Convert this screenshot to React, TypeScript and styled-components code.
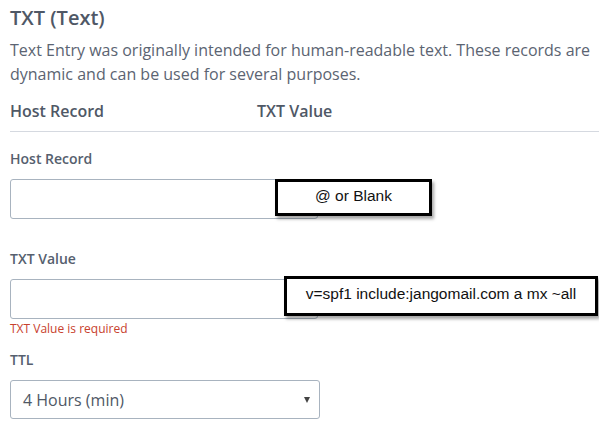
import React from "react";
import styled, { createGlobalStyle } from "styled-components";

const GlobalStyle = createGlobalStyle`
  html, body {
    margin: 0;
    padding: 0;
    background: #ffffff;
  }
  body {
    font-family: "Open Sans", "Liberation Sans", sans-serif;
    color: #555d6b;
  }
`;

const Page = styled.div`
  width: 599px;
  height: 445px;
  overflow: hidden;
  padding: 4px 0 0 10px;
  box-sizing: border-box;
`;

const Title = styled.h2`
  margin: 0;
  font-size: 20px;
  line-height: 28px;
  font-weight: 600;
  color: #4f5866;
`;

const Description = styled.p`
  margin: 6px 0 0;
  font-size: 16px;
  line-height: 24px;
  color: #5b6472;
`;

const HeaderRow = styled.div`
  display: grid;
  grid-template-columns: 247px 1fr;
  margin-top: 14px;
  padding-bottom: 9px;
  border-bottom: 1px solid #d5d9e0;
  font-size: 16px;
  line-height: 22px;
  font-weight: 600;
  color: #4f5866;
`;

const Field = styled.div<{ $gap?: number }>`
  display: flex;
  flex-direction: column;
  margin-top: ${({ $gap }) => $gap ?? 18}px;
`;

const Label = styled.label`
  font-size: 14px;
  line-height: 20px;
  font-weight: 600;
  color: #56606e;
  margin-bottom: 10px;
`;

const InputWrap = styled.div`
  position: relative;
  width: 308px;
  height: 40px;
`;

const Input = styled.input`
  width: 100%;
  height: 100%;
  box-sizing: border-box;
  border: 1px solid #a8b3bf;
  border-radius: 3px;
  background: #fff;
  outline: none;
`;

const Callout = styled.div<{ $left: number; $top: number; $width: number; $height: number }>`
  position: absolute;
  left: ${({ $left }) => $left}px;
  top: ${({ $top }) => $top}px;
  width: ${({ $width }) => $width}px;
  height: ${({ $height }) => $height}px;
  box-sizing: border-box;
  border: 3px solid #000;
  background: #fff;
  box-shadow: 2px 3px 3px rgba(0, 0, 0, 0.35);
  display: flex;
  align-items: center;
  justify-content: center;
  font-family: "Liberation Sans", Arial, sans-serif;
  font-size: 15.5px;
  color: #111;
  padding-bottom: 4px;
`;

const ErrorText = styled.div`
  margin-top: 2px;
  font-size: 12px;
  line-height: 16px;
  color: #c8412d;
`;

const SelectBox = styled.div`
  width: 310px;
  height: 39px;
  box-sizing: border-box;
  border: 1px solid #a8b3bf;
  border-radius: 3px;
  display: flex;
  align-items: center;
  justify-content: space-between;
  padding: 0 9px 0 12px;
  font-size: 16px;
  color: #4f5866;
`;

const Caret = styled.span`
  width: 0;
  height: 0;
  border-left: 3.5px solid transparent;
  border-right: 3.5px solid transparent;
  border-top: 6px solid #444;
`;

export default function App() {
  return (
    <>
      <GlobalStyle />
      <Page>
        <Title>TXT (Text)</Title>
        <Description>
          Text Entry was originally intended for human-readable text. These records are dynamic and can be used for several purposes.
        </Description>
        <HeaderRow>
          <span>Host Record</span>
          <span>TXT Value</span>
        </HeaderRow>

        <Field $gap={17}>
          <Label>Host Record</Label>
          <InputWrap>
            <Input />
            <Callout $left={265} $top={0} $width={157} $height={37}>
              @ or Blank
            </Callout>
          </InputWrap>
        </Field>

        <Field $gap={30}>
          <Label>TXT Value</Label>
          <InputWrap>
            <Input />
            <Callout $left={274} $top={-3} $width={314} $height={40}>
              v=spf1 include:jangomail.com a mx ~all
            </Callout>
          </InputWrap>
          <ErrorText>TXT Value is required</ErrorText>
        </Field>

        <Field $gap={13}>
          <Label>TTL</Label>
          <SelectBox>
            <span>4 Hours (min)</span>
            <Caret />
          </SelectBox>
        </Field>
      </Page>
    </>
  );
}
